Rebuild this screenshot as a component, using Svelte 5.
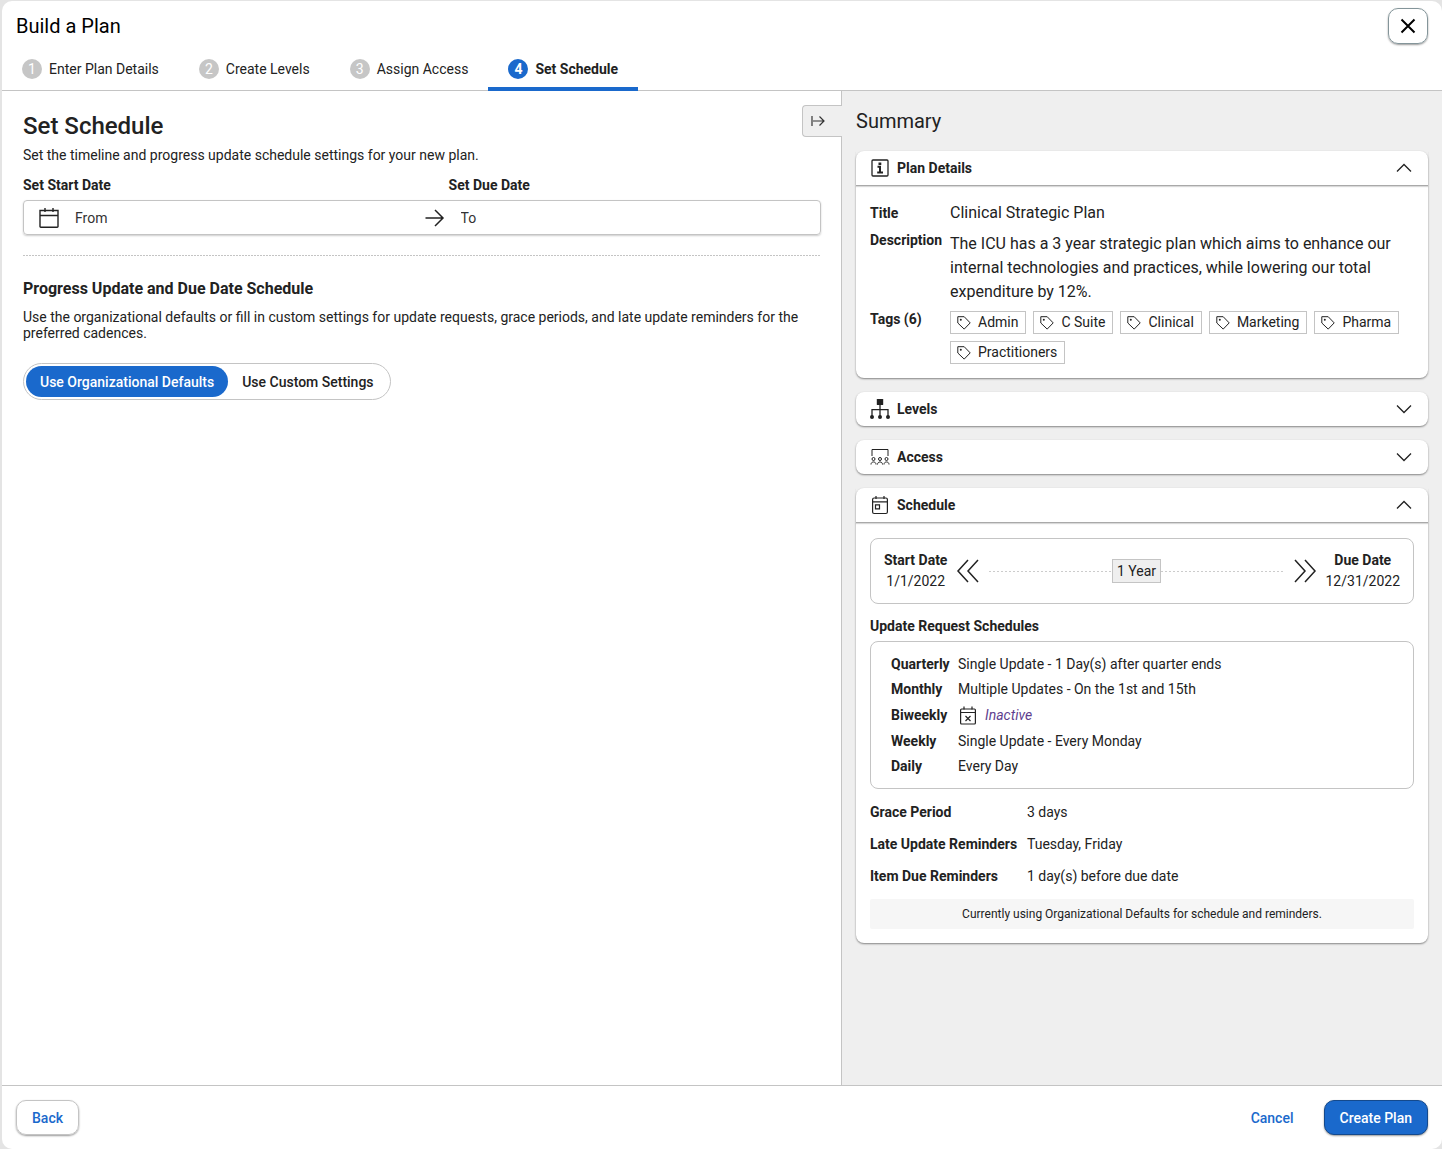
<script lang="ts">
	const steps = ['Enter Plan Details', 'Create Levels', 'Assign Access', 'Set Schedule']
	const tags = ['Admin', 'C Suite', 'Clinical', 'Marketing', 'Pharma', 'Practitioners']
	const updates = [
		{ name: 'Quarterly', text: 'Single Update - 1 Day(s) after quarter ends' },
		{ name: 'Monthly', text: 'Multiple Updates - On the 1st and 15th' },
		{ name: 'Biweekly', text: '' },
		{ name: 'Weekly', text: 'Single Update - Every Monday' },
		{ name: 'Daily', text: 'Every Day' }
	]
	const reminders = [
		{ name: 'Grace Period', text: '3 days' },
		{ name: 'Late Update Reminders', text: 'Tuesday, Friday' },
		{ name: 'Item Due Reminders', text: '1 day(s) before due date' }
	]

	let current = $state(3)
	let useDefaults = $state(true)
	let showSummary = $state(true)
	let open = $state({ details: true, levels: false, access: false, schedule: true })
</script>

{#snippet chevron(up: boolean)}
	<svg class="chevron" width="16" height="10" viewBox="0 0 16 10">
		<path d={up ? 'M1 8.5 8 1.5l7 7' : 'M1 1.5l7 7 7-7'} />
	</svg>
{/snippet}

<div class="page">
	<div class="dialog" role="dialog" aria-labelledby="dialog-title">
		<header class="top">
			<h1 id="dialog-title">Build a Plan</h1>
			<button class="close" aria-label="Close">
				<svg width="16" height="16" viewBox="0 0 16 16">
					<path d="M1.5 1.5l13 13M14.5 1.5l-13 13" stroke="#000" stroke-width="2" />
				</svg>
			</button>
		</header>

		<nav class="steps">
			{#each steps as step, i}
				<button class="step" class:active={i === current} onclick={() => (current = i)}>
					<span class="number">{i + 1}</span>
					{step}
				</button>
			{/each}
		</nav>

		<div class="content" class:wide={!showSummary}>
			<main>
				<h2>Set Schedule</h2>
				<p class="intro">Set the timeline and progress update schedule settings for your new plan.</p>

				<div class="dates labels">
					<label for="start">Set Start Date</label>
					<label for="due">Set Due Date</label>
				</div>
				<div class="dates field">
					<div class="from">
						<svg width="22" height="22" viewBox="0 0 22 22">
							<path d="M2 3.5h18v16a.8.8 0 0 1-.8.8H2.8a.8.8 0 0 1-.8-.8zM2 8.5h18M7 1v4M15 1v4" stroke-width="1.4" />
						</svg>
						<input id="start" type="text" placeholder="From" />
						<svg width="20" height="20" viewBox="0 0 20 20">
							<path d="M.5 10H18M10 2l8 8-8 8" stroke-width="1.5" />
						</svg>
					</div>
					<div class="to">
						<input id="due" type="text" placeholder="To" />
					</div>
				</div>

				<hr />

				<h3>Progress Update and Due Date Schedule</h3>
				<p class="hint">
					Use the organizational defaults or fill in custom settings for update requests, grace periods, and
					late update reminders for the preferred cadences.
				</p>

				<div class="switch" role="group" aria-label="Schedule settings">
					<button class:on={useDefaults} aria-pressed={useDefaults} onclick={() => (useDefaults = true)}>
						Use Organizational Defaults
					</button>
					<button class:on={!useDefaults} aria-pressed={!useDefaults} onclick={() => (useDefaults = false)}>
						Use Custom Settings
					</button>
				</div>
			</main>

			<aside>
				<button class="collapse" aria-label="Toggle summary" onclick={() => (showSummary = !showSummary)}>
					<svg width="16" height="14" viewBox="0 0 16 14">
						<path d="M2 2v10M3 7h11M9.5 2.500L14 7l-4.500 4.500" stroke="#333" stroke-width="1.2" />
					</svg>
				</button>
				{#if showSummary}
					<h2 class="summary">Summary</h2>

					<section class="card">
						<button class="head" class:open={open.details} onclick={() => (open.details = !open.details)}>
							<svg width="20" height="20" viewBox="0 0 20 20">
								<rect x="2" y="2" width="16" height="16" rx="1" stroke-width="1.3" />
								<rect class="solid" x="8.5" y="4.5" width="2.8" height="2.5" />
								<path d="M7.5 8.8H10v6M7.200 14.500h5.800" stroke-width="2" />
							</svg>
							<span>Plan Details</span>
							{@render chevron(open.details)}
						</button>
						{#if open.details}
							<dl class="body details">
								<dt class="mid">Title</dt>
								<dd>Clinical Strategic Plan</dd>
								<dt>Description</dt>
								<dd>
									The ICU has a 3 year strategic plan which aims to enhance our internal technologies and
									practices, while lowering our total expenditure by 12%.
								</dd>
								<dt>Tags (6)</dt>
								<dd class="tags">
									{#each tags as tag}
										<span class="tag">
											<svg width="14" height="14" viewBox="0 0 14 14">
												<path d="M.8.7h6.400l6 6.200-6 6.200L.8 7z" stroke-width="1" />
												<circle class="solid" cx="3.800" cy="3.800" r="1" />
											</svg>
											{tag}
										</span>
									{/each}
								</dd>
							</dl>
						{/if}
					</section>

					<section class="card">
						<button class="head" onclick={() => (open.levels = !open.levels)}>
							<svg width="20" height="20" viewBox="0 0 20 20">
								<rect class="solid" x="6.800" y="0" width="6.400" height="6" rx=".6" />
								<path d="M10 6v12M2 18v-7.400h16V18" stroke-width="1.3" />
								<circle class="solid" cx="2" cy="18" r="2" />
								<circle class="solid" cx="10" cy="18" r="2" />
								<circle class="solid" cx="18" cy="18" r="2" />
							</svg>
							<span>Levels</span>
							{@render chevron(open.levels)}
						</button>
					</section>

					<section class="card">
						<button class="head" onclick={() => (open.access = !open.access)}>
							<svg width="20" height="20" viewBox="0 0 20 20">
								<path d="M2 9V2.500h16V9" />
								<circle cx="3.500" cy="12" r="1.500" />
								<circle cx="10" cy="12" r="1.500" />
								<circle cx="16.500" cy="12" r="1.500" />
								<path d="M1 17.500c0-3.400 5-3.400 5 0M7.500 17.500c0-3.400 5-3.400 5 0M14 17.500c0-3.400 5-3.400 5 0" />
							</svg>
							<span>Access</span>
							{@render chevron(open.access)}
						</button>
					</section>

					<section class="card">
						<button class="head" class:open={open.schedule} onclick={() => (open.schedule = !open.schedule)}>
							<svg width="20" height="20" viewBox="0 0 20 20">
								<rect x="2.600" y="3" width="14.800" height="15.500" rx="1.500" stroke-width="1.2" />
								<path d="M3 6.800h14M6 1v3M14 1v3M5.500 9.800h4v4h-4z" stroke-width="1.2" />
							</svg>
							<span>Schedule</span>
							{@render chevron(open.schedule)}
						</button>
						{#if open.schedule}
							<div class="body">
								<div class="box timeline">
									<div class="date"><strong>Start Date</strong>1/1/2022</div>
									<svg width="24" height="24" viewBox="0 0 24 24">
										<path d="M12 1L2 12l10 11M22 1L12 12l10 11" stroke-width="1.5" />
									</svg>
									<span class="dots"></span>
									<span class="length">1 Year</span>
									<span class="dots"></span>
									<svg width="24" height="24" viewBox="0 0 24 24">
										<path d="M2 1l10 11L2 23M12 1l10 11-10 11" stroke-width="1.5" />
									</svg>
									<div class="date"><strong>Due Date</strong>12/31/2022</div>
								</div>

								<h4>Update Request Schedules</h4>
								<dl class="box updates">
									{#each updates as update}
										<dt>{update.name}</dt>
										{#if update.text}
											<dd>{update.text}</dd>
										{:else}
											<dd class="inactive">
												<svg width="20" height="20" viewBox="0 0 20 20">
													<rect x="2.600" y="3" width="14.800" height="15" rx="1" stroke-width="1.2" />
													<path d="M3 6.500h14M6 .5v3M14 .5v3M7.500 10l5 5M12.500 10l-5 5" stroke-width="1.2" />
												</svg>
												<em>Inactive</em>
											</dd>
										{/if}
									{/each}
								</dl>

								<dl class="reminders">
									{#each reminders as reminder}
										<dt>{reminder.name}</dt>
										<dd>{reminder.text}</dd>
									{/each}
								</dl>
								<p class="note">Currently using Organizational Defaults for schedule and reminders.</p>
							</div>
						{/if}
					</section>
				{/if}
			</aside>
		</div>

		<footer>
			<button class="btn back">Back</button>
			<button class="btn cancel">Cancel</button>
			<button class="btn create">Create Plan</button>
		</footer>
	</div>
</div>

<style>
	:global(body) {
		background: #e4e4e4;
	}
	.page {
		--blue: #1a69cc;
		--line: #c4c4c4;
		--ink: #222;
		--grey: #efefef;
		box-sizing: border-box;
		display: flex;
		min-height: 100vh;
		padding: 1px 0 0 2px;
		color: var(--ink);
		font-family: Roboto, 'Liberation Sans', sans-serif;
		font-size: 14px;
		line-height: 16px;
	}
	.page * {
		box-sizing: border-box;
	}
	.dialog {
		flex: 1;
		min-width: 0;
		display: flex;
		flex-direction: column;
		background: #fff;
		border-radius: 10px;
		overflow: hidden;
	}
	h1,
	h2,
	h3,
	h4,
	p,
	dl,
	dd {
		margin: 0;
	}
	button {
		padding: 0;
		border: 0;
		background: none;
		color: inherit;
		font: inherit;
		cursor: pointer;
	}
	svg {
		flex: none;
		fill: none;
		stroke: var(--ink);
	}
	.solid {
		fill: var(--ink);
		stroke: none;
	}

	.top {
		display: flex;
		align-items: center;
		justify-content: space-between;
		padding: 7px 14px 2px;
	}
	h1 {
		color: #000;
		font-size: 20px;
		font-weight: 400;
		line-height: 24px;
	}
	.close {
		display: flex;
		align-items: center;
		justify-content: center;
		width: 40px;
		height: 36px;
		border: 1px solid #84959a;
		border-radius: 10px;
		box-shadow: 0 1px 2px rgba(0, 0, 0, 0.4);
	}
	.steps {
		display: flex;
		height: 45px;
		border-bottom: 1px solid var(--line);
	}
	.step {
		display: flex;
		align-items: center;
		gap: 7px;
		height: 45px;
		padding: 4px 20px 0;
		border-bottom: 4px solid transparent;
	}
	.step.active {
		border-bottom-color: var(--blue);
		font-weight: 700;
	}
	.number {
		width: 20px;
		height: 20px;
		border-radius: 50%;
		background: #c6c6c6;
		color: #fff;
		line-height: 20px;
		text-align: center;
	}
	.active .number {
		background: var(--blue);
	}

	.content {
		flex: 1;
		display: grid;
		grid-template-columns: minmax(0, 1fr) minmax(400px, 601px);
	}
	.content.wide {
		grid-template-columns: minmax(0, 1fr) 29px;
	}
	main {
		padding: 20px 20px 20px 21px;
	}
	h2 {
		font-size: 24px;
		font-weight: 500;
		line-height: 30px;
	}
	.intro {
		margin-top: 6px;
	}
	.dates {
		display: grid;
		grid-template-columns: 8fr 7fr;
	}
	.labels {
		margin: 14px 0 7px;
		font-weight: 700;
	}
	.field {
		height: 35px;
		border: 1px solid var(--line);
		border-radius: 4px;
		box-shadow: 0 1px 2px rgba(0, 0, 0, 0.2);
	}
	.from,
	.to {
		display: flex;
		align-items: center;
		gap: 15px;
		padding: 0 4px 0 14px;
	}
	.to {
		padding-left: 12px;
	}
	input {
		flex: 1;
		min-width: 0;
		padding: 0;
		border: 0;
		outline: none;
		background: none;
		color: inherit;
		font: inherit;
	}
	input::placeholder {
		color: #333;
		opacity: 1;
	}
	hr {
		height: 1px;
		margin: 20px 0 22px;
		border: 0;
		background: repeating-linear-gradient(90deg, #c4c4c4 0 2px, transparent 2px 3px);
	}
	h3 {
		font-size: 16px;
		font-weight: 700;
		line-height: 22px;
	}
	.hint {
		margin: 9px 0 22px;
	}
	.switch {
		display: inline-flex;
		padding: 2px;
		border: 1px solid var(--line);
		border-radius: 19px;
	}
	.switch button {
		height: 31px;
		padding: 0 14px;
		border-radius: 16px;
		font-weight: 500;
	}
	.switch button.on {
		background: var(--blue);
		color: #fff;
	}

	aside {
		position: relative;
		display: flex;
		flex-direction: column;
		gap: 14px;
		padding: 14px;
		border-left: 1px solid var(--line);
		background: var(--grey);
	}
	.collapse {
		position: absolute;
		top: 14px;
		left: -40px;
		display: flex;
		align-items: center;
		width: 40px;
		height: 32px;
		padding-left: 7px;
		border: 1px solid var(--line);
		border-right: 0;
		border-radius: 4px 0 0 4px;
		background: var(--grey);
	}
	.summary {
		font-size: 20px;
		font-weight: 400;
		line-height: 32px;
	}
	.card {
		border-radius: 8px;
		background: #fff;
		box-shadow: 0 1px 2px rgba(0, 0, 0, 0.45);
	}
	.head {
		display: flex;
		align-items: center;
		gap: 7px;
		width: 100%;
		height: 34px;
		padding: 0 16px 0 14px;
		font-weight: 700;
	}
	.head.open {
		height: 35px;
		border-bottom: 1px solid #a9a9a9;
		box-shadow: 0 1px 1px rgba(0, 0, 0, 0.15);
	}
	.chevron {
		margin-left: auto;
		stroke-width: 1.3;
	}
	.body {
		padding: 15px 14px 14px;
	}
	dt,
	h4 {
		font-size: 14px;
		font-weight: 700;
	}
	.details {
		display: grid;
		grid-template-columns: 80px 1fr;
		gap: 7px 0;
	}
	.details dd {
		font-size: 16px;
		line-height: 24px;
	}
	.mid {
		align-self: center;
	}
	.details .tags {
		display: flex;
		flex-wrap: wrap;
		gap: 7px;
		font-size: 14px;
		line-height: 21px;
	}
	.tag {
		display: flex;
		align-items: center;
		gap: 7px;
		padding: 0 7px 0 6px;
		border: 1px solid var(--line);
	}

	.box {
		border: 1px solid var(--line);
		border-radius: 8px;
	}
	.timeline {
		display: flex;
		align-items: center;
		gap: 9px;
		padding: 11px 13px;
		line-height: 21px;
	}
	.date {
		text-align: center;
	}
	.date strong {
		display: block;
	}
	.dots {
		flex: 1;
		height: 1px;
		background: repeating-linear-gradient(90deg, #ccc 0 2px, transparent 2px 4px);
	}
	.length {
		margin: 0 -9px;
		padding: 0 4px;
		border: 1px solid var(--line);
		background: var(--grey);
		line-height: 22px;
	}
	h4 {
		margin: 14px 0 7px;
	}
	.updates {
		display: grid;
		grid-template-columns: 67px 1fr;
		align-items: center;
		padding: 10px 20px 9px;
		line-height: 25px;
	}
	.inactive {
		display: flex;
		align-items: center;
		gap: 7px;
		height: 27px;
	}
	.inactive em {
		color: #5e3e8e;
	}
	.reminders {
		display: grid;
		grid-template-columns: 157px 1fr;
		margin: 7px 0;
		line-height: 32px;
	}
	.note {
		border-radius: 2px;
		background: #f6f6f6;
		font-size: 12px;
		line-height: 30px;
		text-align: center;
	}

	footer {
		display: flex;
		align-items: center;
		gap: 14px;
		height: 64px;
		padding: 0 14px;
		border-top: 1px solid var(--line);
	}
	.btn {
		height: 35px;
		padding: 0 15px;
		border: 1px solid transparent;
		border-radius: 10px;
		color: var(--blue);
		font-weight: 500;
	}
	.back {
		margin-right: auto;
		border-color: var(--line);
		box-shadow: 0 1px 2px rgba(0, 0, 0, 0.4);
	}
	.create {
		border-color: #14498c;
		background: var(--blue);
		box-shadow: 0 1px 2px rgba(0, 0, 0, 0.4);
		color: #fff;
	}
</style>
